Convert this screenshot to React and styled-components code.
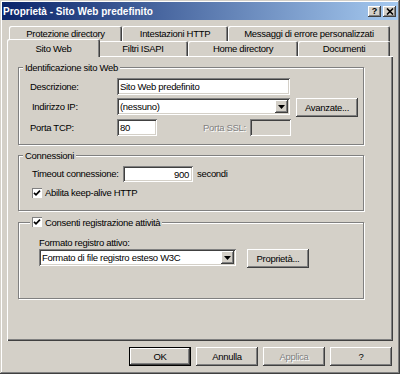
import React from "react";
import styled, { createGlobalStyle, css } from "styled-components";

const GlobalStyle = createGlobalStyle`
  html, body { margin: 0; padding: 0; background: #d4d0c8; }
  body {
    font-family: "Liberation Sans", Arial, sans-serif;
    font-size: 9.5px;
    letter-spacing: -0.3px;
    color: #000;
  }
  * { box-sizing: border-box; }
`;

const raised = css`
  box-shadow: inset -1px -1px #404040, inset 1px 1px #ffffff,
    inset -2px -2px #808080, inset 2px 2px #d4d0c8;
`;
const sunken = css`
  box-shadow: inset 1px 1px #808080, inset -1px -1px #ffffff,
    inset 2px 2px #404040, inset -2px -2px #d4d0c8;
`;

const Window = styled.div`
  width: 400px;
  height: 374px;
  display: flex;
  flex-direction: column;
  padding: 2px;
  background: #d4d0c8;
  box-shadow: inset -1px -1px #404040, inset 1px 1px #d4d0c8,
    inset -2px -2px #808080, inset 2px 2px #ffffff;
`;

const TitleBar = styled.div`
  flex: none;
  height: 18px;
  display: flex;
  align-items: center;
  padding: 0 2px 0 1px;
  background: linear-gradient(to right, #0a246a, #a6caf0);
  color: #fff;
  font-weight: bold;
  font-size: 10px;
  letter-spacing: 0;
`;

const Title = styled.span`
  flex: 1;
  white-space: nowrap;
`;

const TitleButton = styled.div`
  width: 13px;
  height: 11px;
  background: #d4d0c8;
  ${raised};
  display: flex;
  align-items: center;
  justify-content: center;
  color: #000;
  font-size: 9px;
  font-weight: bold;
  line-height: 1;
  & + & { margin-left: 2px; }
`;

const Body = styled.div`
  flex: 1;
  display: flex;
  flex-direction: column;
  padding: 6px 5px 6px;
`;

const TabStrip = styled.div`
  flex: none;
  height: 30px;
  display: flex;
  flex-direction: column;
  padding: 0 3px 0 2px;
`;

const TabRow = styled.div`
  height: 15px;
  display: flex;
`;

const Tab = styled.div`
  flex: 0 0 ${(p) => p.$w}px;
  display: flex;
  align-items: center;
  justify-content: center;
  white-space: nowrap;
  background: #d4d0c8;
  border-radius: 2px 2px 0 0;
  box-shadow: inset 1px 1px #ffffff, inset -1px 0 #404040, inset -2px 0 #808080;
  ${(p) =>
    p.$active &&
    css`
      flex-basis: ${p.$w + 4}px;
      margin: -2px -2px -1px -2px;
      position: relative;
      z-index: 2;
      box-shadow: inset 1px 1px #ffffff, inset -1px 0 #404040,
        inset -2px 0 #808080;
    `}
`;

const Panel = styled.div`
  flex: 1;
  display: flex;
  flex-direction: column;
  align-items: flex-start;
  padding: 11px 0 0 11px;
  background: #d4d0c8;
  box-shadow: inset 1px 1px #ffffff, inset -1px -1px #404040,
    inset -2px -2px #808080;
`;

const Group = styled.div`
  position: relative;
  width: 346px;
  height: ${(p) => p.$h}px;
  margin-top: ${(p) => p.$mt || 0}px;
  padding: ${(p) => p.$pad};
  border: 1px solid #808080;
  box-shadow: inset 1px 1px #ffffff, 1px 1px #ffffff;
  display: flex;
  flex-direction: column;
`;

const Legend = styled.div`
  position: absolute;
  top: -7px;
  left: ${(p) => p.$left || 4}px;
  height: 12px;
  padding: 0 2px;
  background: #d4d0c8;
  display: flex;
  align-items: center;
  white-space: nowrap;
  gap: 3px;
`;

const Row = styled.div`
  display: flex;
  align-items: ${(p) => p.$align || "flex-start"};
  height: ${(p) => p.$h}px;
  margin-top: ${(p) => p.$mt || 0}px;
`;

const Label = styled.span`
  flex: none;
  width: ${(p) => (p.$w ? `${p.$w}px` : "auto")};
  padding-left: ${(p) => p.$pl || 0}px;
  margin-left: ${(p) => p.$ml || 0}px;
  line-height: ${(p) => p.$lh || 17}px;
  white-space: nowrap;
  ${(p) =>
    p.$disabled &&
    css`
      color: #808080;
      text-shadow: 1px 1px #ffffff;
    `}
`;

const TextBox = styled.div`
  flex: none;
  width: ${(p) => p.$w}px;
  height: ${(p) => p.$h || 17}px;
  padding: 0 4px 0 3px;
  display: flex;
  align-items: center;
  justify-content: ${(p) => (p.$right ? "flex-end" : "flex-start")};
  background: ${(p) => (p.$disabled ? "#d4d0c8" : "#ffffff")};
  white-space: nowrap;
  ${sunken};
`;

const Select = styled.div`
  flex: none;
  width: ${(p) => p.$w}px;
  height: 17px;
  padding: 2px;
  display: flex;
  background: #ffffff;
  ${sunken};
`;

const SelectText = styled.span`
  flex: 1;
  padding-left: 1px;
  display: flex;
  align-items: center;
  white-space: nowrap;
`;

const DropButton = styled.div`
  flex: none;
  width: 13px;
  background: #d4d0c8;
  display: flex;
  align-items: center;
  justify-content: center;
  ${raised};
`;

const Button = styled.div`
  flex: none;
  width: ${(p) => p.$w || 62}px;
  height: 19px;
  margin-left: ${(p) => p.$ml || 0}px;
  display: flex;
  align-items: center;
  justify-content: center;
  background: #d4d0c8;
  white-space: nowrap;
  ${raised};
  ${(p) =>
    p.$default &&
    css`
      box-shadow: inset 0 0 0 1px #000000, inset -2px -2px #404040,
        inset 2px 2px #ffffff, inset -3px -3px #808080;
    `}
  ${(p) =>
    p.$disabled &&
    css`
      color: #808080;
      text-shadow: 1px 1px #ffffff;
    `}
`;

const CheckBox = styled.div`
  flex: none;
  width: 10px;
  height: 10px;
  background: #ffffff;
  display: flex;
  align-items: center;
  justify-content: center;
  box-shadow: inset 1px 1px #808080, inset -1px -1px #ffffff;
  margin-right: ${(p) => p.$mr || 0}px;
`;

const ButtonBar = styled.div`
  flex: none;
  height: 19px;
  margin-top: 6px;
  padding-right: 1px;
  display: flex;
  justify-content: flex-end;
  gap: 5px;
`;

const Arrow = () => (
  <svg width="7" height="4" viewBox="0 0 7 4">
    <path d="M0 0 H7 L3.5 4 Z" fill="#000" />
  </svg>
);

const Check = () => (
  <svg width="8" height="8" viewBox="0 0 8 8">
    <path d="M1 3.8 L3 5.8 L7 1.6" fill="none" stroke="#000" strokeWidth="1.7" />
  </svg>
);

const CloseX = () => (
  <svg width="8" height="7" viewBox="0 0 8 7">
    <path d="M1 0.5 L7 6.5 M7 0.5 L1 6.5" stroke="#000" strokeWidth="1.6" />
  </svg>
);

const backTabs = [
  ["Protezione directory", 113],
  ["Intestazioni HTTP", 106],
  ["Messaggi di errore personalizzati", 162],
];
const frontTabs = [
  ["Sito Web", 89, true],
  ["Filtri ISAPI", 90],
  ["Home directory", 110],
  ["Documenti", 92],
];

export default function App() {
  return (
    <>
      <GlobalStyle />
      <Window>
        <TitleBar>
          <Title>Proprietà - Sito Web predefinito</Title>
          <TitleButton>?</TitleButton>
          <TitleButton>
            <CloseX />
          </TitleButton>
        </TitleBar>
        <Body>
          <TabStrip>
            <TabRow>
              {backTabs.map(([t, w]) => (
                <Tab key={t} $w={w}>
                  {t}
                </Tab>
              ))}
            </TabRow>
            <TabRow>
              {frontTabs.map(([t, w, a]) => (
                <Tab key={t} $w={w} $active={a}>
                  {t}
                </Tab>
              ))}
            </TabRow>
          </TabStrip>
          <Panel>
            <Group $h={78} $pad="10px 0 8px 11px">
              <Legend>Identificazione sito Web</Legend>
              <Row $h={17}>
                <Label $w={87}>Descrizione:</Label>
                <TextBox $w={173}>Sito Web predefinito</TextBox>
              </Row>
              <Row $h={19} $mt={3}>
                <Label $w={87} $pl={2}>
                  Indirizzo IP:
                </Label>
                <Select $w={173}>
                  <SelectText>(nessuno)</SelectText>
                  <DropButton>
                    <Arrow />
                  </DropButton>
                </Select>
                <Button $ml={6}>Avanzate...</Button>
              </Row>
              <Row $h={17} $mt={2}>
                <Label $w={87}>Porta TCP:</Label>
                <TextBox $w={40}>80</TextBox>
                <Label $w={47} $ml={46} $disabled>
                  Porta SSL:
                </Label>
                <TextBox $w={41} $disabled />
              </Row>
            </Group>

            <Group $h={56} $mt={10} $pad="10px 0 0 13px">
              <Legend>Connessioni</Legend>
              <Row $h={16} $align="center">
                <Label $w={91} $lh={16}>
                  Timeout connessione:
                </Label>
                <TextBox $w={70} $h={16} $right>
                  900
                </TextBox>
                <Label $ml={4} $lh={16}>
                  secondi
                </Label>
              </Row>
              <Row $h={14} $mt={4} $align="center">
                <CheckBox $mr={3}>
                  <Check />
                </CheckBox>
                <Label $lh={14}>Abilita keep-alive HTTP</Label>
              </Row>
            </Group>

            <Group $h={77} $mt={11} $pad="14px 0 0 20px">
              <Legend $left={11}>
                <CheckBox>
                  <Check />
                </CheckBox>
                Consenti registrazione attività
              </Legend>
              <Row $h={12} $align="center">
                <Label $lh={12}>Formato registro attivo:</Label>
              </Row>
              <Row $h={19}>
                <Select $w={197}>
                  <SelectText>Formato di file registro esteso W3C</SelectText>
                  <DropButton>
                    <Arrow />
                  </DropButton>
                </Select>
                <Button $ml={11}>Proprietà...</Button>
              </Row>
            </Group>
          </Panel>
          <ButtonBar>
            <Button $default>OK</Button>
            <Button>Annulla</Button>
            <Button $disabled>Applica</Button>
            <Button>?</Button>
          </ButtonBar>
        </Body>
      </Window>
    </>
  );
}
